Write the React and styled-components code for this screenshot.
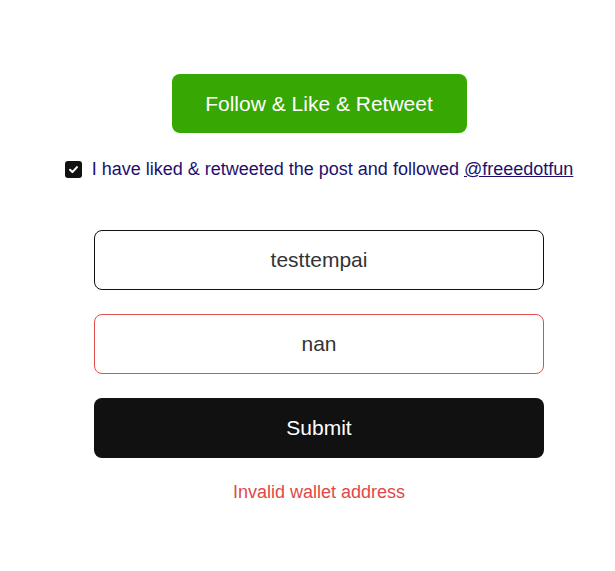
import React from "react";
import styled, { createGlobalStyle } from "styled-components";

const GlobalStyle = createGlobalStyle`
  body {
    margin: 0;
    background: #fff;
    font-family: "Liberation Sans", Arial, sans-serif;
  }
`;

const App = () => {
  return (
    <Page>
      <GlobalStyle />
      <FollowButton>Follow &amp; Like &amp; Retweet</FollowButton>
      <CheckRow>
        <Box>
          <svg width="11" height="11" viewBox="0 0 12 12">
            <path
              d="M2.2 6.3 L4.8 8.8 L9.8 3.4"
              fill="none"
              stroke="#fff"
              strokeWidth="2.2"
              strokeLinecap="round"
              strokeLinejoin="round"
            />
          </svg>
        </Box>
        <span>
          I have liked &amp; retweeted the post and followed{" "}
          <a href="#">@freeedotfun</a>
        </span>
      </CheckRow>
      <Form>
        <Field value="testtempai" readOnly />
        <Field value="nan" readOnly $error />
        <SubmitButton>Submit</SubmitButton>
        <ErrorText>Invalid wallet address</ErrorText>
      </Form>
    </Page>
  );
};

const Page = styled.div`
  display: flex;
  flex-direction: column;
  align-items: center;
  padding: 74px 0 0 23px;
`;

const FollowButton = styled.button`
  width: 295px;
  height: 59px;
  border: none;
  border-radius: 8px;
  background: #36a703;
  color: #fff;
  font-family: inherit;
  font-size: 21px;
  cursor: pointer;
`;

const CheckRow = styled.label`
  display: flex;
  align-items: center;
  gap: 10px;
  margin-top: 26px;
  font-size: 18px;
  line-height: 21px;
  color: #1c1070;

  a {
    color: #1c1070;
    text-decoration: underline;
  }
`;

const Box = styled.span`
  width: 17px;
  height: 17px;
  border-radius: 3px;
  background: #111;
  display: flex;
  align-items: center;
  justify-content: center;
`;

const Form = styled.div`
  width: 450px;
  display: flex;
  flex-direction: column;
  gap: 24px;
  margin-top: 50px;
`;

const Field = styled.input`
  box-sizing: border-box;
  width: 100%;
  height: 60px;
  border: 1px solid ${(p) => (p.$error ? "#e24d4d" : "#111")};
  border-radius: 8px;
  text-align: center;
  font-family: inherit;
  font-size: 21px;
  color: #333;
  outline: none;
`;

const SubmitButton = styled.button`
  height: 60px;
  border: none;
  border-radius: 8px;
  background: #111;
  color: #fff;
  font-family: inherit;
  font-size: 21px;
  cursor: pointer;
`;

const ErrorText = styled.p`
  margin: 0;
  text-align: center;
  font-size: 18px;
  color: #e04848;
`;

export default App;
